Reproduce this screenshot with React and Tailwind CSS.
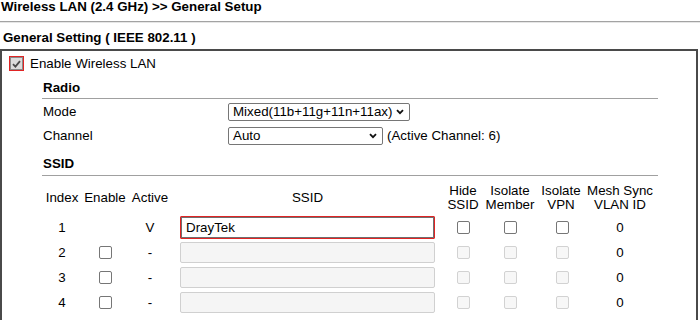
const font = "font-['Liberation_Sans',Arial,sans-serif]"

function Box({ disabled }) {
  return (
    <div
      className={
        disabled
          ? 'w-[13px] h-[13px] rounded-[2px] border border-[#d2d2d2] bg-[#f7f7f7]'
          : 'w-[13px] h-[13px] rounded-[2px] border border-[#767676] bg-white'
      }
    />
  )
}

function Select({ width, value }) {
  return (
    <div
      className="h-[18px] flex items-center justify-between border border-[#767676] rounded-[2px] bg-white pl-[4px] pr-[5px]"
      style={{ width }}
    >
      <span className="leading-[16px] whitespace-nowrap">{value}</span>
      <svg width="8" height="6" viewBox="0 0 8 6" className="shrink-0">
        <path d="M1 1.2 L4 4.2 L7 1.2" fill="none" stroke="#111" strokeWidth="1.8" />
      </svg>
    </div>
  )
}

const cols = 'grid grid-cols-[40px_46px_44px_271px_40px_54px_48px_70px]'

const rows = [
  { idx: 1, enable: null, active: 'V', ssid: 'DrayTek', on: true },
  { idx: 2, enable: true, active: '-', ssid: '', on: false },
  { idx: 3, enable: true, active: '-', ssid: '', on: false },
  { idx: 4, enable: true, active: '-', ssid: '', on: false },
]

export default function App() {
  return (
    <div className={`w-[700px] h-[320px] overflow-hidden bg-white text-black text-[13.33px] ${font}`}>
      <div className="h-[21px] pt-[1px] leading-[12px] pl-[1px] font-bold">Wireless LAN (2.4 GHz) &gt;&gt; General Setup</div>
      <div className="h-[2px] border-t border-[#a3a3a3] bg-[#e6e6e6]" />
      <div className="pt-[7px] pb-[3px] pl-[3px] leading-[16px] font-bold">General Setting ( IEEE 802.11 )</div>

      <div className="w-[698px] h-[300px] border-2 border-[#4a4a4a]">
        <div className="mt-[5px] flex items-center h-[15px]">
          <div className="ml-[7px] w-[15px] h-[15px] border border-[#e02424] flex items-center justify-center">
            <div className="w-[13px] h-[13px] border border-[#8a8a8a] bg-[#dcdcdc] flex items-center justify-center">
              <svg width="9" height="8" viewBox="0 0 9 8">
                <path d="M1 4.2 L3.4 6.6 L8 1.2" fill="none" stroke="#4a4a4a" strokeWidth="1.8" />
              </svg>
            </div>
          </div>
          <span className="ml-[6px] leading-[15px]">Enable Wireless LAN</span>
        </div>

        <div className="ml-[40px] w-[616px]">
          <div className="mt-[9px] h-[16px] leading-[16px] pl-[1px] font-bold">Radio</div>
          <div className="mt-[2px] border-t border-[#a0a0a0]" />

          <div className="mt-[4px] flex items-center h-[18px]">
            <span className="w-[186px] pl-[1px] leading-[18px]">Mode</span>
            <Select width={182} value="Mixed(11b+11g+11n+11ax)" />
          </div>
          <div className="mt-[6px] flex items-center h-[18px]">
            <span className="w-[186px] pl-[1px] leading-[18px]">Channel</span>
            <Select width={155} value="Auto" />
            <span className="ml-[4px]">(Active Channel: 6)</span>
          </div>

          <div className="mt-[11px] h-[16px] leading-[16px] pl-[1px] font-bold">SSID</div>
          <div className="mt-[3px] border-t border-[#a0a0a0]" />

          <div className={`${cols} mt-[8px] mb-[3px] h-[28px] items-center text-center leading-[14px]`}>
            <span>Index</span>
            <span>Enable</span>
            <span>Active</span>
            <span>SSID</span>
            <span>Hide<br />SSID</span>
            <span>Isolate<br />Member</span>
            <span>Isolate<br />VPN</span>
            <span className="whitespace-nowrap">Mesh Sync<br />VLAN ID</span>
          </div>

          {rows.map(r => (
            <div key={r.idx} className={`${cols} h-[25px] items-center text-center`}>
              <span>{r.idx}</span>
              <div className="flex justify-center">{r.enable && <Box />}</div>
              <span>{r.active}</span>
              <div className="px-[8px]">
                {r.on ? (
                  <div className="h-[23px] border border-[#e02424] rounded-[1px]">
                    <div className="h-full border border-[#6f6f6f] text-left pl-[4px] leading-[19px]">{r.ssid}</div>
                  </div>
                ) : (
                  <div className="h-[21px] border border-[#d0d0d0] rounded-[2px] bg-[#f5f5f5]" />
                )}
              </div>
              <div className="flex justify-center"><Box disabled={!r.on} /></div>
              <div className="flex justify-center"><Box disabled={!r.on} /></div>
              <div className="flex justify-center pl-[2px]"><Box disabled={!r.on} /></div>
              <span>0</span>
            </div>
          ))}
        </div>
      </div>
    </div>
  )
}
